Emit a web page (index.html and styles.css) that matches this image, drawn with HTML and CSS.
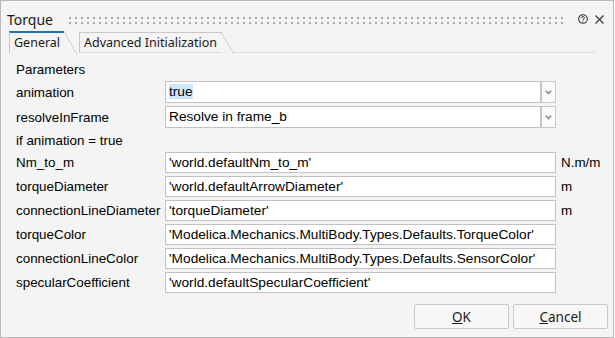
FILE: index.html
```html
<!DOCTYPE html>
<html lang="en">
<head>
    <meta charset="UTF-8">
    <title>Torque</title>
    <link rel="stylesheet" href="styles.css">
</head>
<body>
<div class="window">
    <div class="titlebar">
        <span class="title">Torque</span>
        <div class="grip"></div>
        <svg class="help" width="10" height="10" viewBox="0 0 10 10">
            <circle cx="5" cy="5" r="4.3" fill="none" stroke="#333" stroke-width="1.1"/>
            <path d="M3.6 4 Q3.6 2.6 5 2.6 Q6.4 2.6 6.4 3.8 Q6.4 4.6 5.4 5 Q5 5.2 5 6" fill="none" stroke="#333" stroke-width="1"/>
            <rect x="4.5" y="6.7" width="1" height="1" fill="#333"/>
        </svg>
        <svg class="close" width="9" height="9" viewBox="0 0 9 9">
            <path d="M0.5 0.5 L8.5 8.5 M8.5 0.5 L0.5 8.5" stroke="#333" stroke-width="1.1"/>
        </svg>
    </div>

    <div class="tabs">
        <div class="tab active">General</div>
        <div class="tab">Advanced Initialization</div>
        <div class="tab-line"></div>
    </div>

    <div class="panel">
        <div class="params">
            <div class="section">Parameters</div>

            <div class="label">animation</div>
            <div class="combo">
                <div class="field"><span class="selected">true</span></div>
                <div class="drop"><svg width="7" height="5" viewBox="0 0 7 5"><path d="M0.8 0.8 L3.5 3.6 L6.2 0.8" fill="none" stroke="#8c8c8c" stroke-width="1.5"/></svg></div>
            </div>
            <div class="unit"></div>

            <div class="label">resolveInFrame</div>
            <div class="combo">
                <div class="field">Resolve in frame_b</div>
                <div class="drop"><svg width="7" height="5" viewBox="0 0 7 5"><path d="M0.8 0.8 L3.5 3.6 L6.2 0.8" fill="none" stroke="#8c8c8c" stroke-width="1.5"/></svg></div>
            </div>
            <div class="unit"></div>

            <div class="section">if animation = true</div>

            <div class="label">Nm_to_m</div>
            <div class="field">'world.defaultNm_to_m'</div>
            <div class="unit">N.m/m</div>

            <div class="label">torqueDiameter</div>
            <div class="field">'world.defaultArrowDiameter'</div>
            <div class="unit">m</div>

            <div class="label">connectionLineDiameter</div>
            <div class="field">'torqueDiameter'</div>
            <div class="unit">m</div>

            <div class="label">torqueColor</div>
            <div class="field">'Modelica.Mechanics.MultiBody.Types.Defaults.TorqueColor'</div>
            <div class="unit"></div>

            <div class="label">connectionLineColor</div>
            <div class="field">'Modelica.Mechanics.MultiBody.Types.Defaults.SensorColor'</div>
            <div class="unit"></div>

            <div class="label">specularCoefficient</div>
            <div class="field">'world.defaultSpecularCoefficient'</div>
            <div class="unit"></div>
        </div>
    </div>

    <div class="buttons">
        <button class="btn"><u>O</u>K</button>
        <button class="btn"><u>C</u>ancel</button>
    </div>
</div>
</body>
</html>
```

FILE: styles.css
```css
body {
    margin: 0;
    background: #fff;
}

.window {
    width: 614px;
    height: 338px;
    box-sizing: border-box;
    border: 1px solid #b9b9b9;
    background: #f4f4f4;
    display: flex;
    flex-direction: column;
    font-family: "Liberation Sans", Arial, sans-serif;
    font-size: 13.4px;
    color: #000;
}

/* title bar */
.titlebar {
    height: 24px;
    padding: 6px 9px 0 6px;
    display: flex;
    align-items: center;
}

.title {
    font-family: "Noto Sans", sans-serif;
    font-size: 14px;
    color: #1a1a1a;
}

.grip {
    flex: 1;
    height: 7px;
    margin: 2px 11px 0 16px;
    background-image: linear-gradient(to right, #a6a6a6 2px, transparent 2px),
                      linear-gradient(to right, #a6a6a6 2px, transparent 2px);
    background-size: 6px 2px;
    background-position: 0 0, 0 5px;
    background-repeat: repeat-x;
}

.help {
    margin-right: 7px;
}

/* tabs */
.tabs {
    height: 22px;
    display: flex;
    padding-left: 8px;
    font-family: "Noto Sans", sans-serif;
    font-size: 12.5px;
    color: #1a1a1a;
}

.tab {
    position: relative;
    margin-top: 1px;
    padding-left: 4px;
    width: 137px;
    border-left: 1px solid #c8c8c8;
    border-top: 1px solid #c8c8c8;
    border-bottom: 1px solid #dcdcdc;
    line-height: 20px;
    margin-left: 15px;
}

.tab::after {
    content: '';
    position: absolute;
    top: -1px;
    right: -13px;
    width: 13px;
    height: 22px;
    background: linear-gradient(to top right, transparent calc(50% - 0.7px), #c8c8c8 50%, transparent calc(50% + 0.7px));
}

.tab.active {
    margin: 0;
    width: 50px;
    border-top: 2px solid #1f72b0;
    border-bottom: none;
    line-height: 20px;
}

.tab.active::after {
    top: -2px;
    height: 24px;
}

.tab-line {
    flex: 1;
    margin: 0 18px 0 13px;
    border-bottom: 1px solid #dcdcdc;
}

/* parameters */
.panel {
    padding: 7px 0 0 15px;
}

.params {
    display: grid;
    grid-template-columns: 149px 391px auto;
    grid-template-rows: 18px 22px 22px 18px repeat(6, 21px);
    row-gap: 3px;
    align-items: center;
}

.section {
    grid-column: 1 / 4;
}

.field {
    height: 21px;
    box-sizing: border-box;
    border: 1px solid #c2c2c2;
    background: #fff;
    padding-left: 3px;
    line-height: 19px;
    font-size: 13.7px;
    white-space: nowrap;
    overflow: hidden;
}

.combo {
    display: flex;
    height: 22px;
}

.combo .field {
    flex: 1;
    height: 22px;
    line-height: 20px;
}

.selected {
    background: #cce8ff;
}

.drop {
    width: 15px;
    box-sizing: border-box;
    border: 1px solid #c8c8c8;
    background: #fafafa;
    display: flex;
    align-items: center;
    justify-content: center;
}

.unit {
    padding-left: 5px;
}

/* buttons */
.buttons {
    display: flex;
    justify-content: flex-end;
    gap: 4px;
    padding: 11px 5px 0 0;
}

.btn {
    width: 95px;
    height: 25px;
    border: 1px solid #c9c9c9;
    border-radius: 2px;
    background: #f7f7f7;
    font-family: "Noto Sans", sans-serif;
    font-size: 13.5px;
    color: #1a1a1a;
    padding: 0;
}
```
